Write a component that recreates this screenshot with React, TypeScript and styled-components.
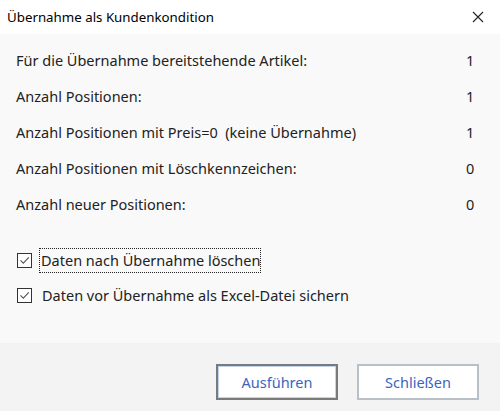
import * as React from 'react'
import styled, { createGlobalStyle } from 'styled-components'

const GlobalStyle = createGlobalStyle`
  html, body {
    margin: 0;
    padding: 0;
    background: #f3f3f3;
  }
  body {
    font-family: "Noto Sans", "Open Sans", sans-serif;
    font-size: 14.5px;
  }
`

const rows = [
  { label: 'Für die Übernahme bereitstehende Artikel:', value: 1 },
  { label: 'Anzahl Positionen:', value: 1 },
  { label: 'Anzahl Positionen mit Preis=0  (keine Übernahme)', value: 1 },
  { label: 'Anzahl Positionen mit Löschkennzeichen:', value: 0 },
  { label: 'Anzahl neuer Positionen:', value: 0 },
]

const CloseIcon = () => (
  <svg width="12" height="12" viewBox="0 0 12 12">
    <path d="M1 1 L11 11 M11 1 L1 11" stroke="#222" strokeWidth="1.1" fill="none" />
  </svg>
)

const CheckIcon = () => (
  <svg width="11" height="11" viewBox="0 0 11 11">
    <path d="M1.5 5.3 L4.3 8.2 L9.8 2.3" stroke="#555" strokeWidth="1.1" fill="none" />
  </svg>
)

const Dialog = () => {
  return (
    <Window>
      <TitleBar>
        <Title>Übernahme als Kundenkondition</Title>
        <CloseButton>
          <CloseIcon />
        </CloseButton>
      </TitleBar>
      <Body>
        {rows.map((r) => (
          <Row key={r.label}>
            <Label>{r.label}</Label>
            <Value>{r.value}</Value>
          </Row>
        ))}
        <Checks>
          <CheckRow>
            <Box>
              <CheckIcon />
            </Box>
            <CheckLabel focused>Daten nach Übernahme löschen</CheckLabel>
          </CheckRow>
          <CheckRow>
            <Box>
              <CheckIcon />
            </Box>
            <CheckLabel>Daten vor Übernahme als Excel-Datei sichern</CheckLabel>
          </CheckRow>
        </Checks>
      </Body>
      <Footer>
        <Button primary>Ausführen</Button>
        <Button>Schließen</Button>
      </Footer>
    </Window>
  )
}

export default function App() {
  return (
    <>
      <GlobalStyle />
      <Dialog />
    </>
  )
}

const Window = styled.div`
  width: 500px;
  height: 411px;
  display: flex;
  flex-direction: column;
  color: #1e1e1e;
`

const TitleBar = styled.div`
  height: 34px;
  background: #ffffff;
  display: flex;
  align-items: center;
  justify-content: space-between;
  padding: 0 0 0 7px;
  box-sizing: border-box;
`

const Title = styled.div`
  font-size: 13.3px;
  color: #000;
`

const CloseButton = styled.div`
  width: 46px;
  height: 34px;
  display: flex;
  align-items: center;
  justify-content: center;
  padding-left: 2px;
  box-sizing: border-box;
`

const Body = styled.div`
  height: 309px;
  background: #f9f9f9;
  padding: 8px 24px 0 16px;
  box-sizing: border-box;
`

const Row = styled.div`
  height: 36px;
  display: flex;
  align-items: center;
  justify-content: space-between;
`

const Label = styled.span`
  color: #222;
  white-space: pre;
`

const Value = styled.span`
  width: 10px;
  text-align: left;
  color: #222;
`

const Checks = styled.div`
  margin-top: 26px;
  display: flex;
  flex-direction: column;
  gap: 11px;
`

const CheckRow = styled.div`
  height: 24px;
  display: flex;
  align-items: center;
  padding-left: 1px;
`

const Box = styled.div`
  width: 13px;
  height: 13px;
  border: 1px solid #333;
  background: #fff;
  display: flex;
  align-items: center;
  justify-content: center;
  box-sizing: content-box;
`

const CheckLabel = styled.span<{ focused?: boolean }>`
  margin-left: ${(p) => (p.focused ? '7px' : '8px')};
  padding: 1px 0 2px 1px;
  border: 1px dotted ${(p) => (p.focused ? '#222' : 'transparent')};
  color: #222;
`

const Footer = styled.div`
  flex: 1;
  background: #f3f3f3;
  display: flex;
  justify-content: flex-end;
  align-items: flex-start;
  gap: 19px;
  padding: 21px 21px 0 0;
  box-sizing: border-box;
`

const Button = styled.button<{ primary?: boolean }>`
  width: 122px;
  height: 36px;
  box-sizing: border-box;
  background: #fff;
  border: 2px solid ${(p) => (p.primary ? '#7a7a7a' : '#b9bfc6')};
  box-shadow: inset 0 0 0 1px ${(p) => (p.primary ? '#c3d3ec' : '#ffffff')};
  font-family: "Noto Sans", "Open Sans", sans-serif;
  font-size: 14.5px;
  color: #3a66bf;
  padding: 0;
  cursor: default;
`
